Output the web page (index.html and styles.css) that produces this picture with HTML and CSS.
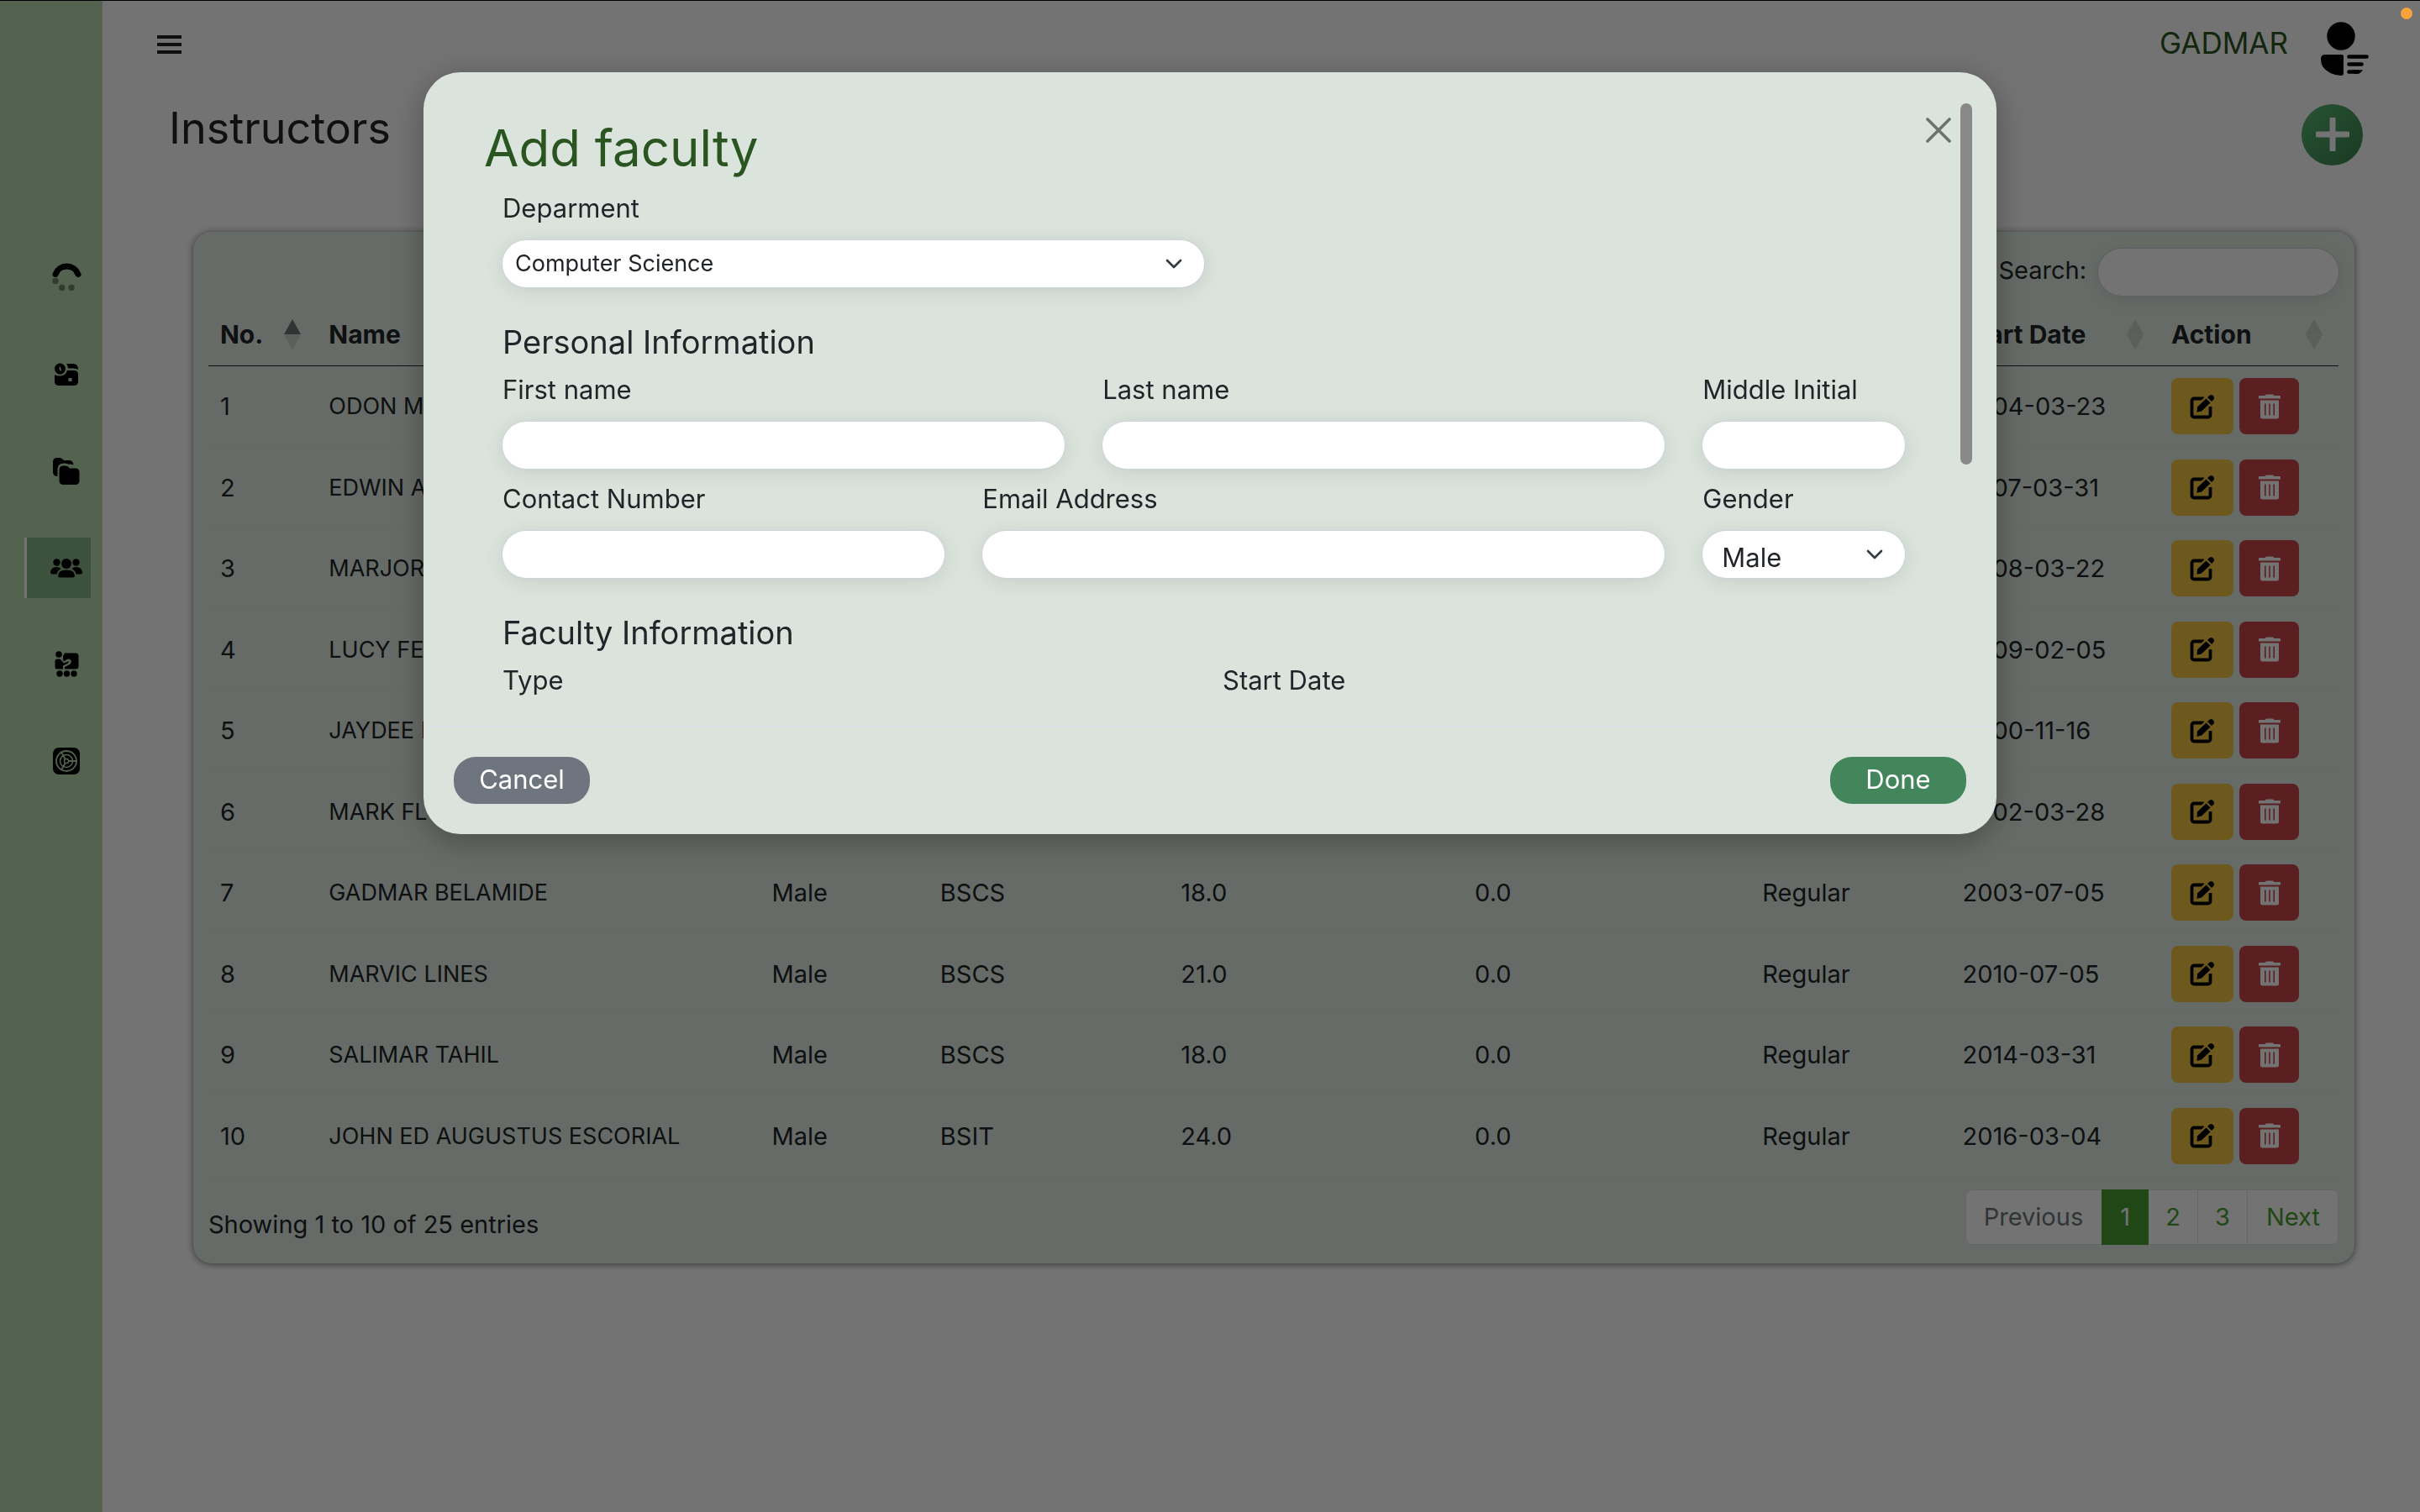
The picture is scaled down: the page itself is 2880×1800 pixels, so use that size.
FILE: index.html
```html
<!DOCTYPE html>
<html lang="en">
<head>
<meta charset="utf-8">
<meta name="viewport" content="width=device-width, initial-scale=1">
<title>Instructors</title>
<link rel="stylesheet" href="styles.css">
</head>
<body>
<svg class="sprite" aria-hidden="true">
  <symbol id="i-edit" viewBox="0 0 30 30">
    <path d="M17 5.500H5A2.500 2.500 0 0 0 2.500 8V25A2.500 2.500 0 0 0 5 27.500H22A2.500 2.500 0 0 0 24.500 25V15" fill="none" stroke="currentColor" stroke-width="3.800"/>
    <path d="M8 13.500 20 1.500 28 9.500 14.500 24H8Z" fill="#f2c444"/>
    <path d="M9 15.500 19.500 5.500 24.500 10.500 14 20.500 8.500 21.800Z"/>
    <path d="M21 4 23.500 1.700Q25.500 .2 27.800 2.200 30 4.500 28.400 6.600L26 9Z"/>
  </symbol>
  <symbol id="i-trash" viewBox="0 0 26 30">
    <path fill-rule="evenodd" d="M1 2H7.500L9 .5H17L18.500 2H25A1 1 0 0 1 26 3V5.500H0V3A1 1 0 0 1 1 2ZM2 7.500H24V27A2.500 2.500 0 0 1 21.500 29.500H4.500A2.500 2.500 0 0 1 2 27ZM7 11.500V25.500H8.600V11.500ZM12.200 11.500V25.500H13.800V11.500ZM17.400 11.500V25.500H19V11.500Z"/>
  </symbol>
  <symbol id="i-sort" viewBox="0 0 20 36">
    <path class="up" d="M10 0 20 18H0Z"/><path class="down" d="M0 18.500H20L10 36Z"/>
  </symbol>
  <symbol id="i-chevron" viewBox="0 0 20 12">
    <path d="M2 2 10 10 18 2" fill="none" stroke="#343a40" stroke-width="2.600" stroke-linecap="round" stroke-linejoin="round"/>
  </symbol>
</svg>

<div class="page">
  <nav class="sidebar" aria-label="Main">
    <a class="side-link" href="#" aria-label="Dashboard">
      <svg width="38" height="38" viewBox="0 0 38 38"><path d="M6 14.500A14.400 14.400 0 0 1 33 14.500" fill="none" stroke="#000" stroke-width="7" stroke-linecap="round"/><g opacity=".4"><circle cx="6" cy="22.500" r="3.700"/><circle cx="13.700" cy="30.500" r="3.700"/><circle cx="25" cy="30.500" r="3.700"/></g></svg>
    </a>
    <a class="side-link" href="#" aria-label="Schedule">
      <svg width="38" height="38" viewBox="0 0 38 38"><path fill-rule="evenodd" d="M11.500 5.500A6.500 6.500 0 1 1 11.400 5.500ZM10.600 9.500V13L12.300 15 13.200 13.500 12.200 12V9.500Z"/><path d="M19 6H27Q33 6 33 13 31 11.500 27 11.500H21Q21 8 19 6Z"/><path fill-rule="evenodd" d="M5 19Q8 21 12 20.500 18 20 20 14H28Q33 14 33 19V27Q33 32 28 32H10Q5 32 5 27ZM21.500 23V27H25.500V23Z"/></svg>
    </a>
    <a class="side-link" href="#" aria-label="Subjects">
      <svg width="38" height="38" viewBox="0 0 38 38"><path d="M3 8Q3 3 8 3H11Q14 3 16 6H22Q27 6 27.500 11.500 25 10.500 21 10.500 19 9.500 16 9.500 9 9.500 8.500 16V25Q3 25 3 20Z"/><path d="M10.500 17.500Q10.500 12.500 15.500 12.500H18Q21 12.500 23 15.500H29.500Q34.500 15.500 34.500 20.500V30Q34.500 35 29.500 35H15.500Q10.500 35 10.500 30Z"/></svg>
    </a>
    <a class="side-link active" href="#" aria-label="Instructors" aria-current="page">
      <svg width="38" height="38" viewBox="0 0 38 38"><circle cx="7.500" cy="12.500" r="4.200"/><circle cx="30.500" cy="12.500" r="4.200"/><circle cx="19" cy="14" r="6"/><path d="M9 28.500Q9 21.500 19 21.500T29 28.500Q29 30.500 26.500 30.500H11.500Q9 30.500 9 28.500Z"/><path d="M0 24Q1 18 7 18 11 18 12.500 20 8.500 22 7.500 26.500H2Q0 26.500 0 24Z"/><path d="M38 24Q37 18 31 18 27 18 25.500 20 29.500 22 30.500 26.500H36Q38 26.500 38 24Z"/></svg>
    </a>
    <a class="side-link" href="#" aria-label="Classes">
      <svg width="38" height="38" viewBox="0 0 38 38"><circle cx="10" cy="7" r="3.800"/><path d="M17 5.500H30Q33.500 5.500 33.500 9V21Q33.500 24.500 30 24.500H17V22L23 19Q26 16 24 13.500 21 11 17 15L15 14.500V9Z"/><path d="M5.500 15Q5.500 12.500 8.500 12.500H11.500L16 17.500 22 15 21 17.500 15 20.500V24.500H8Q5.500 24.500 5.500 22Z"/><circle cx="11" cy="30" r="3.700"/><circle cx="19.500" cy="30" r="3.700"/><circle cx="28" cy="30" r="3.700"/></svg>
    </a>
    <a class="side-link" href="#" aria-label="Settings">
      <svg width="38" height="38" viewBox="0 0 38 38"><rect x="3" y="3" width="32" height="32" rx="7"/><g fill="none" stroke="#b8dcb2"><circle cx="19" cy="19" r="12" stroke-width="1.800"/><circle cx="19" cy="19" r="7.500" stroke-width="1.600"/><circle cx="19" cy="19" r="2.600" stroke-width="1.500"/><path d="M21.500 19H31M17.700 16.700 13 8.500M17.700 21.300 13 29.500" stroke-width="1.800"/></g></svg>
    </a>
  </nav>

  <main class="main">
    <header class="topbar">
      <button class="menu-btn" type="button" aria-label="Toggle menu">
        <svg width="29" height="24" viewBox="0 0 29 24"><path d="M0 3H29M0 12H29M0 21H29" stroke="#212529" stroke-width="4"/></svg>
      </button>
      <a class="user" href="#">
        <span>GADMAR</span>
        <svg width="58" height="76" viewBox="0 0 58 76"><circle cx="25" cy="28" r="16.700"/><path d="M6 50H26Q28 50 28 52V72Q28 75 25 75 10 74 3 64 1 60 1 55 1 50 6 50Z"/><path d="M34.500 52.500H55.500M34.500 61.500H49.500M34.500 70.500H45" stroke="#000" stroke-width="4.600" stroke-linecap="round"/><path d="M40 68.200H51Q48 73 44 72.800H40Z"/></svg>
      </a>
    </header>

    <div class="title-row">
      <h1>Instructors</h1>
      <button class="add-btn" type="button" aria-label="Add instructor">
        <svg width="40" height="40" viewBox="0 0 40 40"><path d="M20 2V38M2 20H38" stroke="#fff" stroke-width="7" stroke-linecap="round"/></svg>
      </button>
    </div>

    <section class="card">
      <div class="search">
        <label for="search">Search:</label>
        <input id="search" class="field-input" type="search">
      </div>
      <table class="grid">
        <colgroup><col class="c-no"><col class="c-name"><col class="c-sex"><col class="c-prog"><col class="c-load"><col class="c-over"><col class="c-type"><col class="c-date"><col class="c-act"></colgroup>
        <thead>
          <tr>
            <th><div class="th asc">No.<svg><use href="#i-sort"/></svg></div></th>
            <th>Name</th><th></th><th></th><th></th><th></th><th></th>
            <th><div class="th">Start Date<svg><use href="#i-sort"/></svg></div></th>
            <th><div class="th">Action<svg><use href="#i-sort"/></svg></div></th>
          </tr>
        </thead>
        <tbody id="rows"></tbody>
      </table>
      <div class="card-foot">
        <p>Showing 1 to 10 of 25 entries</p>
        <div class="pager">
          <button type="button" disabled>Previous</button>
          <button type="button" class="current" aria-current="page">1</button>
          <button type="button" class="num">2</button>
          <button type="button" class="num">3</button>
          <button type="button">Next</button>
        </div>
      </div>
    </section>
  </main>
</div>

<div class="overlay">
  <div class="modal" role="dialog" aria-modal="true" aria-labelledby="modal-title">
    <form class="modal-body">
      <div class="modal-head">
        <h2 id="modal-title">Add faculty</h2>
        <button class="close" type="button" aria-label="Close">
          <svg width="30" height="30" viewBox="0 0 30 30"><path d="M2 2 28 28M28 2 2 28" stroke="#6c736e" stroke-width="3.600" stroke-linecap="round"/></svg>
        </button>
      </div>
      <div class="fields">
        <div class="field half">
          <label for="dept">Deparment</label>
          <div class="select"><select id="dept" class="field-input small"><option>Computer Science</option></select><svg><use href="#i-chevron"/></svg></div>
        </div>
        <h3>Personal Information</h3>
        <div class="field s5"><label for="first">First name</label><input id="first" class="field-input" type="text"></div>
        <div class="field s5"><label for="last">Last name</label><input id="last" class="field-input" type="text"></div>
        <div class="field s2"><label for="mi">Middle Initial</label><input id="mi" class="field-input" type="text"></div>
        <div class="field s4"><label for="contact">Contact Number</label><input id="contact" class="field-input" type="text"></div>
        <div class="field s6"><label for="email">Email Address</label><input id="email" class="field-input" type="email"></div>
        <div class="field s2">
          <label for="gender">Gender</label>
          <div class="select"><select id="gender" class="field-input low"><option>Male</option></select><svg><use href="#i-chevron"/></svg></div>
        </div>
        <h3>Faculty Information</h3>
        <div class="field s6"><label for="type">Type</label><select id="type" class="field-input"></select></div>
        <div class="field s6"><label for="start">Start Date</label><input id="start" class="field-input" type="text"></div>
      </div>
    </form>
    <div class="scroll-thumb"></div>
    <footer class="modal-foot">
      <button class="btn cancel" type="button">Cancel</button>
      <button class="btn done" type="button">Done</button>
    </footer>
  </div>
</div>
<span class="rec-dot"></span>
<script src="rows.js"></script>
</body>
</html>
```
FILE: rows.js
```js
const rows = [
  ["ODON M", "", "", "", "", "", "2004-03-23"],
  ["EDWIN A", "", "", "", "", "", "2007-03-31"],
  ["MARJOR", "", "", "", "", "", "2008-03-22"],
  ["LUCY FER", "", "", "", "", "", "2009-02-05"],
  ["JAYDEE B", "", "", "", "", "", "2000-11-16"],
  ["MARK FLO", "", "", "", "", "", "2002-03-28"],
  ["GADMAR BELAMIDE", "Male", "BSCS", "18.0", "0.0", "Regular", "2003-07-05"],
  ["MARVIC LINES", "Male", "BSCS", "21.0", "0.0", "Regular", "2010-07-05"],
  ["SALIMAR TAHIL", "Male", "BSCS", "18.0", "0.0", "Regular", "2014-03-31"],
  ["JOHN ED AUGUSTUS ESCORIAL", "Male", "BSIT", "24.0", "0.0", "Regular", "2016-03-04"]
];
document.getElementById("rows").innerHTML = rows.map((cells, i) => `
  <tr><td>${i + 1}</td>${cells.map((c, n) => `<td${n === 0 ? ' class="name"' : ""}>${c}</td>`).join("")}
  <td><div class="actions">
    <button class="edit" type="button" aria-label="Edit"><svg width="30" height="30"><use href="#i-edit"/></svg></button>
    <button class="del" type="button" aria-label="Delete"><svg width="26" height="30"><use href="#i-trash"/></svg></button>
  </div></td></tr>`).join("");
```
FILE: styles.css
```css
* { box-sizing: border-box; }
body {
  margin: 0;
  font-family: Inter, "Open Sans", sans-serif;
  font-size: 29px;
  color: #212529;
  background: #fff;
  border-top: 1px solid #000;
}
h1, h2, h3, p { margin: 0; font-weight: 400; }
button, input, select { font: inherit; color: inherit; }
button { border: 0; padding: 0; background: none; }
svg { display: block; fill: currentColor; }
a { color: #000; text-decoration: none; }
.sprite { display: none; }

.page { display: flex; min-height: calc(100vh - 1px); }

/* Sidebar */
.sidebar {
  flex: 0 0 122px;
  display: flex;
  flex-direction: column;
  gap: 43px;
  padding: 294px 14px 0 29px;
  background: #b8dcb2;
}
.side-link {
  display: flex;
  align-items: center;
  height: 72px;
  padding-left: 31px;
}
.side-link.active {
  padding-left: 28px;
  border-left: 3px solid #fff;
  background: #88b685;
}

/* Top bar and title */
.main { flex: 1; min-width: 0; }
.topbar {
  display: flex;
  align-items: center;
  justify-content: space-between;
  height: 103px;
  padding: 0 61px 0 65px;
}
.user {
  display: flex;
  align-items: center;
  gap: 38px;
  font-size: 35px;
  color: #2a5520;
}
.user span { padding-bottom: 3px; }
.user svg { fill: #000; }
.title-row {
  display: flex;
  justify-content: space-between;
  align-items: center;
  height: 112px;
  padding: 0 68px 0 79px;
}
.title-row h1 { font-size: 52px; line-height: 56px; padding-bottom: 15px; }
.add-btn {
  display: grid;
  place-items: center;
  width: 73px;
  height: 73px;
  border-radius: 50%;
  background: linear-gradient(135deg, #59b874, #3a814c);
}

/* Table card */
.card {
  margin: 60px 78px 0 108px;
  padding: 20px 19px 22px 18px;
  border-radius: 22px;
  background: #e3eee5;
  box-shadow: 0 1px 8px rgba(0, 0, 0, .55);
}
.search {
  display: flex;
  justify-content: flex-end;
  align-items: center;
  gap: 14px;
}
.search .field-input { width: 286px; }
.search label { padding-bottom: 6px; }

.grid { width: 100%; table-layout: fixed; border-collapse: separate; border-spacing: 0; }
.c-no { width: 5.1%; }
.c-name { width: 20.8%; }
.c-sex { width: 7.9%; }
.c-prog { width: 11.3%; }
.c-load { width: 13.8%; }
.c-over { width: 13.5%; }
.c-type { width: 9.4%; }
.c-date { width: 9.8%; }
.c-act { width: 8.4%; }
.grid th {
  height: 84px;
  padding: 8px 14px 0;
  text-align: left;
  font-weight: 700;
  font-size: 30px;
  border-bottom: 1px solid #212529;
}
.th { display: flex; justify-content: space-between; align-items: center; margin-right: 5px; white-space: nowrap; }
.th svg { width: 20px; height: 36px; color: #c9d1cb; }
.th.asc svg { --up: #6a7370; }
.up { fill: var(--up, currentColor); }
.grid td {
  height: 96px;
  padding: 0 14px;
  white-space: nowrap;
  border-bottom: 1px solid #dce6e0;
}
.grid tr:nth-child(even) td { height: 97px; }
.grid td.name { font-size: 27px; }
.actions { display: flex; gap: 7px; }
.actions button {
  display: grid;
  place-items: center;
  width: 74px;
  height: 67px;
  border-radius: 8px;
}
.edit { background: #f2c444; color: #000; }
.actions .del { width: 71px; background: #ca4549; color: #fff; }

.card-foot {
  display: flex;
  justify-content: space-between;
  align-items: center;
  padding-top: 15px;
}
.card-foot p { padding-top: 16px; }
.pager { display: flex; border-radius: 8px; background: #fff; box-shadow: inset 0 0 0 1px #dee2e6; }
.pager button {
  height: 66px;
  padding: 0 22px 2px;
  color: #499e31;
  border-right: 1px solid #dee2e6;
}
.pager .num { width: 59px; padding: 0 0 2px; }
.pager button:first-child, .pager button:last-child { border-right: 0; }
.pager button:disabled { color: #6c757d; }
.pager .current { color: #fff; background: #499e31; border-right: 0; }

/* Form controls */
.field-input {
  display: block;
  width: 100%;
  height: 56px;
  padding: 0 23px;
  border: 0;
  border-radius: 28px;
  outline: 0;
  appearance: none;
  background: #fff;
  box-shadow: 0 0 0 1px #ced4da, 0 4px 24px rgba(0, 0, 0, .1);
}
.select { display: grid; align-items: center; }
.select > * { grid-area: 1 / 1; }
.select svg { justify-self: end; width: 20px; height: 12px; margin-right: 26px; pointer-events: none; }
.small { font-size: 27px; padding: 0 15px 2px; }
.low { padding-top: 6px; }

/* Modal */
.overlay {
  position: fixed;
  inset: 0;
  display: flex;
  justify-content: center;
  align-items: flex-start;
  padding-top: 85px;
  background: rgba(0, 0, 0, .55);
  border-top: 1px solid #000;
}
.modal {
  position: relative;
  width: 65%;
  padding-top: 36px;
  border-radius: 44px;
  background: #dae4dc;
  box-shadow: 0 8px 40px rgba(0, 0, 0, .3);
}
.modal-body { max-height: 712px; padding: 0 54px 0 72px; overflow: hidden; }
.modal-head { display: flex; justify-content: space-between; align-items: flex-start; padding: 18px 0 12px; }
.modal-head h2 { font-size: 60px; line-height: 72px; color: #2a5520; }
.fields {
  display: grid;
  grid-template-columns: repeat(12, 1fr);
  column-gap: 45px;
  row-gap: 12px;
  margin: 0 55px 60px 22px;
  font-size: 31px;
}
.fields h3 { grid-column: 1 / -1; margin: 25px 0 -7px; font-size: 38px; line-height: 56px; }
.field { display: grid; gap: 14px; }
.field label { line-height: 48px; }
.half { grid-column: 1 / -1; width: 50%; }
.s2 { grid-column: span 2; }
.s4 { grid-column: span 4; }
.s5 { grid-column: span 5; }
.s6 { grid-column: span 6; }
.scroll-thumb {
  position: absolute;
  top: 37px;
  right: 29px;
  width: 14px;
  height: 430px;
  border-radius: 7px;
  background: #8a898a;
}
.modal-foot {
  display: flex;
  justify-content: space-between;
  margin-top: 30px;
  padding: 36px;
  border-top: 1px solid #dde1e9;
}
.btn { width: 162px; height: 56px; padding-bottom: 3px; border-radius: 26px; color: #fff; font-size: 31px; }
.cancel { background: #6f757e; }
.done { background: #43865b; }

/* Recording indicator of the display */
.rec-dot {
  position: fixed;
  top: 9px;
  right: 9px;
  width: 14px;
  height: 14px;
  border-radius: 50%;
  background: #f5a43a;
}
```
